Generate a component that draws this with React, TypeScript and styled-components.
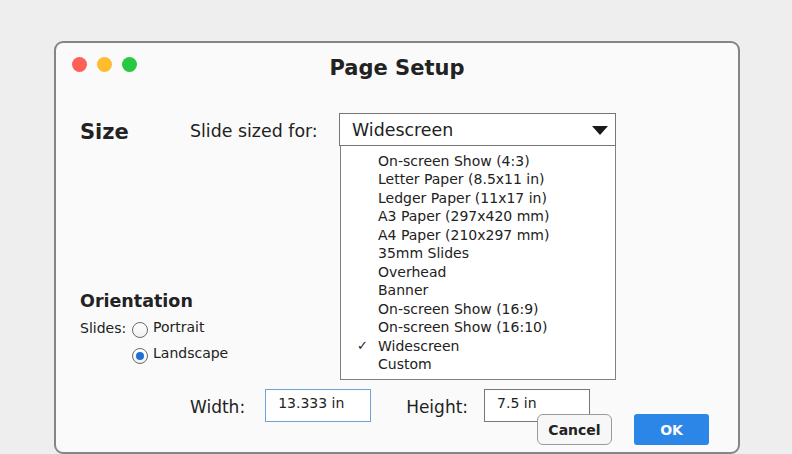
import React from 'react';
import styled, { createGlobalStyle } from 'styled-components';

const GlobalStyle = createGlobalStyle`
  html, body {
    margin: 0;
    padding: 0;
    background: #eeeeee;
    font-family: 'DejaVu Sans', 'Liberation Sans', sans-serif;
    color: #222;
  }
  * { box-sizing: border-box; }
`;

const Page = styled.div`
  width: 792px;
  height: 454px;
  overflow: hidden;
  padding: 41px 0 0 54px;
`;

const Window = styled.div`
  width: 686px;
  height: 413px;
  background: #fafafa;
  border: 2px solid #858585;
  border-radius: 9px;
  display: flex;
  flex-direction: column;
`;

const TitleBar = styled.div`
  display: grid;
  grid-template-columns: 1fr auto 1fr;
  align-items: center;
  padding: 13px 16px 0 16px;
  height: 37px;
`;

const Lights = styled.div`
  display: flex;
  gap: 10px;
  margin-top: -7px;
`;

const Light = styled.span<{ color: string }>`
  width: 15px;
  height: 15px;
  border-radius: 50%;
  background: ${p => p.color};
`;

const Title = styled.h1`
  margin: 0;
  font-size: 21px;
  line-height: 24px;
  font-weight: bold;
  color: #222;
`;

const Body = styled.div`
  display: flex;
  flex-direction: column;
  padding: 0 27px 0 24px;
`;

const SizeRow = styled.div`
  display: flex;
  align-items: center;
  margin-top: 33px;
  height: 33px;
`;

const SectionTitle = styled.div<{ size: number }>`
  font-size: ${p => p.size}px;
  font-weight: bold;
  line-height: 22px;
`;

const SizeTitle = styled(SectionTitle)`
  width: 110px;
  margin-top: 5px;
`;

const Label = styled.span<{ size: number }>`
  font-size: ${p => p.size}px;
  line-height: 20px;
  white-space: nowrap;
`;

const SlideLabel = styled(Label)`
  width: 149px;
  margin-top: 3px;
`;

const SelectWrap = styled.div`
  position: relative;
`;

const Select = styled.div`
  width: 277px;
  height: 33px;
  border: 1.5px solid #777;
  background: #fff;
  display: flex;
  align-items: center;
  justify-content: space-between;
  padding: 0 7px 0 12px;
  font-size: 17.4px;
`;

const Caret = styled.span`
  width: 0;
  height: 0;
  border-left: 8px solid transparent;
  border-right: 8px solid transparent;
  border-top: 9px solid #1a1a1a;
  margin-top: 1px;
`;

const Menu = styled.ul`
  position: absolute;
  top: 100%;
  left: 1px;
  width: 276px;
  height: 234px;
  margin: 0;
  padding: 6px 0 0 0;
  list-style: none;
  background: #fff;
  border: 1.5px solid #808080;
  border-top: none;
  z-index: 2;
`;

const MenuItem = styled.li`
  position: relative;
  font-size: 14px;
  line-height: 18.45px;
  padding-left: 37px;
  white-space: nowrap;
`;

const Check = styled.span`
  position: absolute;
  left: 16px;
  top: 0;
  font-size: 13px;
`;

const Orientation = styled.div`
  margin-top: 144px;
  display: flex;
  flex-direction: column;
`;

const RadioRow = styled.div<{ indent: number }>`
  display: flex;
  align-items: center;
  height: 26px;
  padding-left: ${p => p.indent}px;
`;

const SlidesLabel = styled(Label)`
  width: 52px;
  margin-top: -3px;
`;

const Radio = styled.span<{ checked?: boolean }>`
  width: 16px;
  height: 16px;
  border-radius: 50%;
  border: 1.2px solid #6a6a6a;
  background: linear-gradient(#ffffff, #f1f1f1);
  display: flex;
  align-items: center;
  justify-content: center;
  margin-right: 5px;
  margin-top: 2px;
  &::after {
    content: '';
    width: 8px;
    height: 8px;
    border-radius: 50%;
    background: ${p => (p.checked ? '#1f6fd6' : 'transparent')};
  }
`;

const RadioText = styled(Label)`
  margin-top: -4px;
`;

const FieldsRow = styled.div`
  display: flex;
  align-items: center;
  margin-top: 21px;
  padding-left: 110px;
  height: 33px;
`;

const FieldLabel = styled(Label)`
  margin-top: 3px;
`;

const Field = styled.div<{ focused?: boolean }>`
  width: 106px;
  height: 33px;
  border: 1.5px solid ${p => (p.focused ? '#6fa2d8' : '#777')};
  background: #fff;
  font-size: 14px;
  line-height: 18px;
  padding: 4px 0 0 12px;
  margin-left: ${p => (p.focused ? 20 : 16)}px;
  margin-right: 35px;
`;

const Buttons = styled.div`
  display: flex;
  justify-content: flex-end;
  gap: 22px;
  margin-top: -8px;
  padding-right: 2px;
  position: relative;
  z-index: 1;
`;

const Button = styled.button<{ primary?: boolean }>`
  width: 75px;
  height: 31px;
  font-family: inherit;
  font-size: 14px;
  font-weight: bold;
  border-radius: ${p => (p.primary ? '3px' : '6px')};
  border: ${p => (p.primary ? 'none' : '1px solid #9a9a9a')};
  background: ${p => (p.primary ? '#2c86e7' : '#f7f7f7')};
  color: ${p => (p.primary ? '#fff' : '#222')};
  padding: 0;
`;

const sizes = [
  'On-screen Show (4:3)',
  'Letter Paper (8.5x11 in)',
  'Ledger Paper (11x17 in)',
  'A3 Paper (297x420 mm)',
  'A4 Paper (210x297 mm)',
  '35mm Slides',
  'Overhead',
  'Banner',
  'On-screen Show (16:9)',
  'On-screen Show (16:10)',
  'Widescreen',
  'Custom',
];

export default function App() {
  const selected = 'Widescreen';
  return (
    <Page>
      <GlobalStyle />
      <Window>
        <TitleBar>
          <Lights>
            <Light color="#fe5f57" />
            <Light color="#febc2e" />
            <Light color="#28c840" />
          </Lights>
          <Title>Page Setup</Title>
          <span />
        </TitleBar>
        <Body>
          <SizeRow>
            <SizeTitle size={21}>Size</SizeTitle>
            <SlideLabel size={17.4}>Slide sized for:</SlideLabel>
            <SelectWrap>
              <Select>
                {selected}
                <Caret />
              </Select>
              <Menu>
                {sizes.map(s => (
                  <MenuItem key={s}>
                    {s === selected && <Check>✓</Check>}
                    {s}
                  </MenuItem>
                ))}
              </Menu>
            </SelectWrap>
          </SizeRow>
          <Orientation>
            <SectionTitle size={17.5}>Orientation</SectionTitle>
            <RadioRow indent={0} style={{ marginTop: 4 }}>
              <SlidesLabel size={14}>Slides:</SlidesLabel>
              <Radio />
              <RadioText size={14}>Portrait</RadioText>
            </RadioRow>
            <RadioRow indent={52}>
              <Radio checked />
              <RadioText size={14}>Landscape</RadioText>
            </RadioRow>
          </Orientation>
          <FieldsRow>
            <FieldLabel size={17}>Width:</FieldLabel>
            <Field focused>13.333 in</Field>
            <FieldLabel size={17}>Height:</FieldLabel>
            <Field>7.5 in</Field>
          </FieldsRow>
          <Buttons>
            <Button>Cancel</Button>
            <Button primary>OK</Button>
          </Buttons>
        </Body>
      </Window>
    </Page>
  );
}
